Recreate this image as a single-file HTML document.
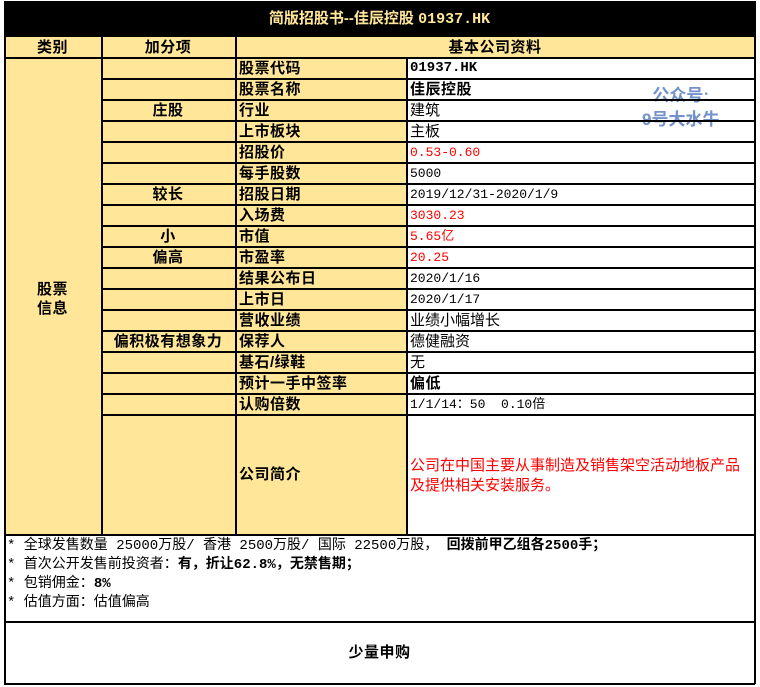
<!DOCTYPE html><html><head><meta charset="utf-8"><style>
body{margin:0;width:760px;height:687px;background:#fff;position:relative;overflow:hidden;font-family:"Liberation Sans","Noto Sans CJK SC",sans-serif;}
div{position:absolute;box-sizing:border-box;}
.c{font-size:14px;line-height:21px;white-space:nowrap;}
.b{font-weight:bold;color:#000;}
.l{font-size:15px;letter-spacing:0.5px;}
.m{font-family:"Liberation Mono","Noto Sans CJK SC",monospace;font-size:13px;}
.ctr{text-align:center;}
.y{background:#FFE699;}
.r{color:#f00;}
.h{height:1.5px;background:#000;}
.v{width:1.5px;background:#000;}
</style></head><body>
<div style="left:4px;top:1px;width:751px;height:36px;background:#000;"></div>
<div class="c b ctr" style="left:4px;top:8px;width:751px;color:#FFE699;font-size:15px;">简版招股书--佳辰控股 <span style="font-family:'Liberation Mono',monospace;">01937.HK</span></div>
<div class="y" style="left:4px;top:37px;width:751px;height:21px;"></div>
<div class="y" style="left:4px;top:58px;width:402px;height:476px;"></div>
<div class="c b ctr l" style="left:4px;top:37px;width:97px;">类别</div>
<div class="c b ctr l" style="left:101px;top:37px;width:134px;">加分项</div>
<div class="c b ctr l" style="left:235px;top:37px;width:520px;">基本公司资料</div>
<div class="c b ctr l" style="left:4px;top:280px;width:97px;line-height:19px;white-space:normal;">股票<br>信息</div>
<div class="c b ctr l" style="left:101px;top:100px;width:134px;">庄股</div>
<div class="c b ctr l" style="left:101px;top:184px;width:134px;">较长</div>
<div class="c b ctr l" style="left:101px;top:226px;width:134px;">小</div>
<div class="c b ctr l" style="left:101px;top:247px;width:134px;">偏高</div>
<div class="c b ctr l" style="left:101px;top:331px;width:134px;">偏积极有想象力</div>
<div class="c b l" style="left:239px;top:58px;">股票代码</div>
<div class="c b l" style="left:239px;top:79px;">股票名称</div>
<div class="c b l" style="left:239px;top:100px;">行业</div>
<div class="c b l" style="left:239px;top:121px;">上市板块</div>
<div class="c b l" style="left:239px;top:142px;">招股价</div>
<div class="c b l" style="left:239px;top:163px;">每手股数</div>
<div class="c b l" style="left:239px;top:184px;">招股日期</div>
<div class="c b l" style="left:239px;top:205px;">入场费</div>
<div class="c b l" style="left:239px;top:226px;">市值</div>
<div class="c b l" style="left:239px;top:247px;">市盈率</div>
<div class="c b l" style="left:239px;top:268px;">结果公布日</div>
<div class="c b l" style="left:239px;top:289px;">上市日</div>
<div class="c b l" style="left:239px;top:310px;">营收业绩</div>
<div class="c b l" style="left:239px;top:331px;">保荐人</div>
<div class="c b l" style="left:239px;top:352px;">基石/绿鞋</div>
<div class="c b l" style="left:239px;top:373px;">预计一手中签率</div>
<div class="c b l" style="left:239px;top:394px;">认购倍数</div>
<div class="c b l" style="left:239px;top:464px;">公司简介</div>
<div class="c b m" style="left:410px;top:58px;font-size:14px;">01937.HK</div>
<div class="c b l" style="left:410px;top:79px;">佳辰控股</div>
<div class="c" style="left:410px;top:100px;font-size:15px;">建筑</div>
<div class="c" style="left:410px;top:121px;font-size:15px;">主板</div>
<div class="c r m" style="left:410px;top:142px;">0.53-0.60</div>
<div class="c m" style="left:410px;top:163px;">5000</div>
<div class="c m" style="left:410px;top:184px;">2019/12/31-2020/1/9</div>
<div class="c r m" style="left:410px;top:205px;">3030.23</div>
<div class="c r m" style="left:410px;top:226px;">5.65亿</div>
<div class="c r m" style="left:410px;top:247px;">20.25</div>
<div class="c m" style="left:410px;top:268px;">2020/1/16</div>
<div class="c m" style="left:410px;top:289px;">2020/1/17</div>
<div class="c" style="left:410px;top:310px;font-size:15px;">业绩小幅增长</div>
<div class="c" style="left:410px;top:331px;font-size:15px;">德健融资</div>
<div class="c" style="left:410px;top:352px;font-size:15px;">无</div>
<div class="c b l" style="left:410px;top:373px;">偏低</div>
<div class="c m" style="left:410px;top:394px;">1/1/14：50&nbsp;&nbsp;0.10倍</div>
<div class="c r" style="left:410px;top:456px;line-height:20px;font-size:15px;">公司在中国主要从事制造及销售架空活动地板产品<br>及提供相关安装服务。</div>
<div class="c b" style="left:642px;top:84px;color:#5b80c0;font-size:17px;line-height:24px;text-align:center;opacity:.85;">公众号:<br>9号大水牛</div>
<div class="c m" style="left:7px;top:537px;font-size:14px;line-height:19px;">* 全球发售数量 25000万股/ 香港 2500万股/ 国际 22500万股， <b>回拨前甲乙组各2500手；</b><br>* 首次公开发售前投资者：<b>有，折让62.8%，无禁售期；</b><br>* 包销佣金：<b>8%</b><br>* 估值方面：估值偏高</div>
<div class="c b ctr l" style="left:4px;top:642px;width:751px;">少量申购</div>
<div class="h" style="left:4px;top:57px;width:751px;"></div>
<div class="h" style="left:101px;top:78px;width:654px;"></div>
<div class="h" style="left:101px;top:99px;width:654px;"></div>
<div class="h" style="left:101px;top:120px;width:654px;"></div>
<div class="h" style="left:101px;top:141px;width:654px;"></div>
<div class="h" style="left:101px;top:162px;width:654px;"></div>
<div class="h" style="left:101px;top:183px;width:654px;"></div>
<div class="h" style="left:101px;top:204px;width:654px;"></div>
<div class="h" style="left:101px;top:225px;width:654px;"></div>
<div class="h" style="left:101px;top:246px;width:654px;"></div>
<div class="h" style="left:101px;top:267px;width:654px;"></div>
<div class="h" style="left:101px;top:288px;width:654px;"></div>
<div class="h" style="left:101px;top:309px;width:654px;"></div>
<div class="h" style="left:101px;top:330px;width:654px;"></div>
<div class="h" style="left:101px;top:351px;width:654px;"></div>
<div class="h" style="left:101px;top:372px;width:654px;"></div>
<div class="h" style="left:101px;top:393px;width:654px;"></div>
<div class="h" style="left:101px;top:414px;width:654px;"></div>
<div class="h" style="left:4px;top:534px;width:751px;"></div>
<div class="h" style="left:4px;top:621px;width:751px;"></div>
<div class="h" style="left:4px;top:683px;width:751px;"></div>
<div class="v" style="left:4px;top:37px;height:647px;"></div>
<div class="v" style="left:101px;top:37px;height:498px;"></div>
<div class="v" style="left:235px;top:37px;height:498px;"></div>
<div class="v" style="left:406px;top:57px;height:478px;"></div>
<div class="v" style="left:754px;top:1px;height:683px;"></div>
</body></html>
